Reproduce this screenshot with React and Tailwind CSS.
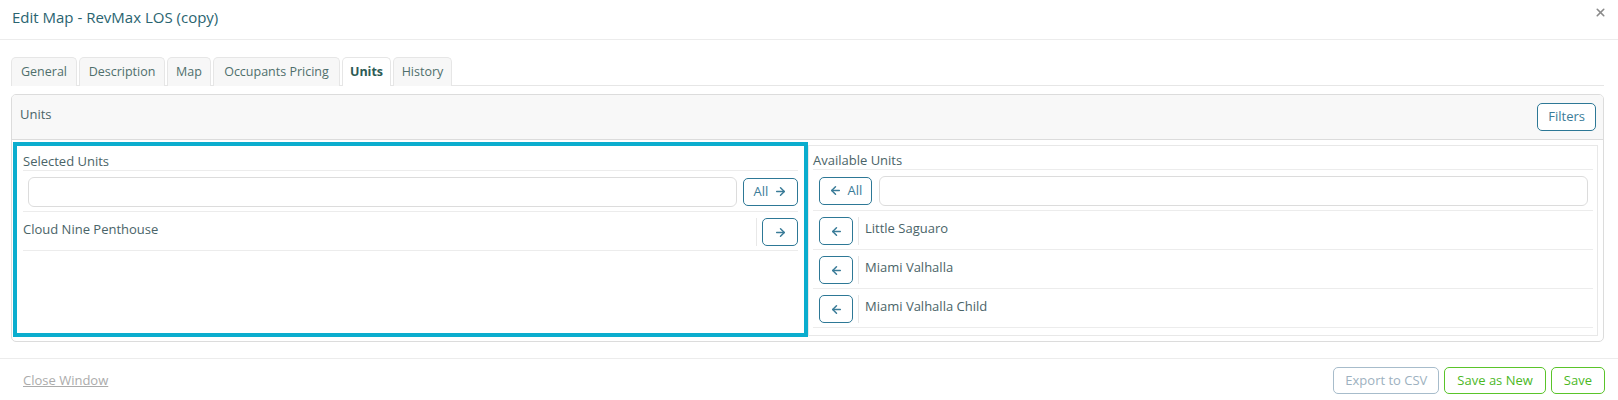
import { ArrowLeft, ArrowRight, X } from "lucide-react";

const tabs = [
  { label: "General", w: "w-[66px]" },
  { label: "Description", w: "w-[86px]" },
  { label: "Map", w: "w-[44px]" },
  { label: "Occupants Pricing", w: "w-[127px]" },
  { label: "Units", w: "w-[49px]" },
  { label: "History", w: "w-[59px]" },
];
const available = ["Little Saguaro", "Miami Valhalla", "Miami Valhalla Child"];

function SmallButton({ children, className = "" }) {
  return (
    <button
      className={`h-[28px] shrink-0 flex items-center justify-center gap-1.5 rounded-[5px] border border-[#2d7896] text-[#3b7c98] text-[13px] bg-white ${className}`}
    >
      {children}
    </button>
  );
}

export default function App() {
  return (
    <div
      className="w-[1618px] h-[400px] bg-white text-[#4a6468] overflow-hidden"
      style={{ fontFamily: '"Open Sans", "Liberation Sans", sans-serif' }}
    >
      {/* header */}
      <div className="h-[40px] flex items-center justify-between pl-[12px] pr-[11px] border-b border-[#ececec]">
        <h1 className="text-[15px] text-[#2a6470] -mt-[5px]">Edit Map - RevMax LOS (copy)</h1>
        <X size={13} strokeWidth={3} className="text-[#8a8a8a] -mt-[14px]" />
      </div>

      {/* tabs */}
      <div className="mt-[17px] mx-[11px] mr-[14px] flex gap-[2px] border-b border-[#e6e6e6] h-[29px]">
        {tabs.map((t) => (
          <div
            key={t.label}
            className={`${t.w} h-[29px] flex items-center justify-center rounded-t-[5px] border border-b-0 border-[#e6e6e6] text-[12.5px] ${
              t.label === "Units"
                ? "bg-white text-[#2d5b55] font-bold"
                : "bg-[#f7f7f7] text-[#4f6f6c]"
            }`}
          >
            {t.label}
          </div>
        ))}
      </div>

      {/* units panel */}
      <div className="mt-[8px] ml-[11px] mr-[14px] border border-[#dcdcdc] rounded-[5px] overflow-hidden">
        <div className="h-[45px] bg-[#f8f8f8] border-b border-[#dcdcdc] flex justify-between pl-[8px] pr-[7px]">
          <span className="text-[13px] mt-[10px]">Units</span>
          <button className="mt-[8px] h-[28px] px-[10px] rounded-[5px] border border-[#2d7896] text-[#3b7c98] text-[13px] bg-white">
            Filters
          </button>
        </div>

        <div className="flex pt-[2px] pb-[4px] pl-[1px] pr-[5px]">
          {/* selected column */}
          <div className="w-[795px] h-[195px] border-4 border-[#0badce] px-[6px]">
            <div className="h-[25px] border-b border-[#ececec] text-[13px] leading-none pt-[9px]">
              Selected Units
            </div>
            <div className="h-[41px] border-b border-[#ececec] flex items-center gap-[6px] pl-[5px] pt-[1px]">
              <input className="flex-1 h-[30px] rounded-[6px] border border-[#dcdcdc] outline-none" />
              <SmallButton className="w-[55px]">
                All <ArrowRight size={13} strokeWidth={2.75} />
              </SmallButton>
            </div>
            <div className="h-[39px] border-b border-[#ececec] flex justify-between">
              <span className="text-[13px] mt-[8px]">Cloud Nine Penthouse</span>
              <div className="flex items-start pt-[6px] gap-[5px]">
                <div className="w-px h-[28px] bg-[#e8e8e8]" />
                <SmallButton className="w-[36px]">
                  <ArrowRight size={13} strokeWidth={2.75} />
                </SmallButton>
              </div>
            </div>
          </div>

          {/* available column */}
          <div className="flex-1 mt-[3px] h-[191px] border border-[#e8e8e8] px-[4px]">
            <div className="h-[24px] border-b border-[#ececec] text-[13px] leading-none pt-[8px]">
              Available Units
            </div>
            <div className="h-[41px] border-b border-[#ececec] flex items-center gap-[7px] pl-[6px] pr-[5px] pt-[1px]">
              <SmallButton className="w-[53px]">
                <ArrowLeft size={13} strokeWidth={2.75} /> All
              </SmallButton>
              <input className="flex-1 h-[30px] rounded-[6px] border border-[#dcdcdc] outline-none" />
            </div>
            {available.map((name) => (
              <div key={name} className="h-[39px] border-b border-[#ececec] flex items-start pl-[6px] pt-[6px] gap-[5px]">
                <SmallButton className="w-[34px]">
                  <ArrowLeft size={13} strokeWidth={2.75} />
                </SmallButton>
                <div className="w-px h-[28px] bg-[#e8e8e8]" />
                <span className="text-[13px] ml-[1px] mt-[2px]">{name}</span>
              </div>
            ))}
          </div>
        </div>
      </div>

      {/* footer */}
      <div className="mt-[16px] border-t border-[#ececec] flex items-center justify-between pl-[23px] pr-[13px] pt-[8px]">
        <a className="text-[13px] text-[#ababab] underline">Close Window</a>
        <div className="flex gap-[5px]">
          <button className="h-[27px] px-[11px] rounded-[5px] border border-[#a7bccb] text-[#9db1c0] text-[13px] bg-white">
            Export to CSV
          </button>
          <button className="h-[27px] px-[12px] rounded-[5px] border border-[#5ac42a] text-[#4cb81f] text-[13px] bg-white">
            Save as New
          </button>
          <button className="h-[27px] px-[12px] rounded-[5px] border border-[#5ac42a] text-[#4cb81f] text-[13px] bg-white">
            Save
          </button>
        </div>
      </div>
    </div>
  );
}
